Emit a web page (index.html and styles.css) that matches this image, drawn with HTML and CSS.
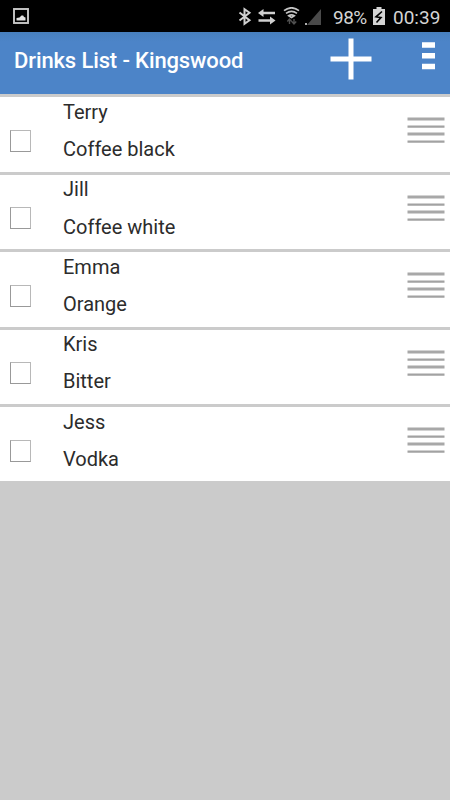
FILE: index.html
```
<!DOCTYPE html>
<html lang="en">

<head>
    <meta charset="UTF-8">
    <meta name="viewport" content="width=device-width, initial-scale=1.0">
    <title>Drinks List - Kingswood</title>
    <link rel="stylesheet" href="styles.css">
</head>

<body>
    <!-- Phone status bar -->
    <div class="status-bar">
        <svg class="picture-icon" width="16" height="16" viewBox="0 0 16 16">
            <rect x="1" y="1" width="14" height="14" fill="none" stroke="#c8c8c8" stroke-width="1.9" />
            <path d="M3.5 12.5V10l3-.5 2-2h1.7L11 9l1.5.5v3z" fill="#e0e0e0" />
        </svg>
        <svg class="status-icons" width="84" height="20" viewBox="0 0 84 20">
            <path d="M1.5 5.5l10 7.7-5 3.6V2.2l5 3.6-10 7.7" fill="none" stroke="#d0d0d0" stroke-width="2" />
            <path d="M20 6l5.5-4v2.7H37v2.6H25.5V10zM37.5 13.5l-5.5-4v2.7H20.5v2.6H32v2.7z" fill="#d0d0d0" />
            <path d="M46 3.6q7.5-5.6 15 0M48 6.4q5.5-4 11 0M50.7 8.8q2.8-2 5.6 0l-2.8 1.7z" fill="none" stroke="#c4c4c4" stroke-width="1.7" />
            <path d="M51.5 12v5M49.3 14.5l2.2-2.5 2.2 2.5M56 12v5M53.8 14.5l2.2 2.5 2.2-2.5" fill="none" stroke="#505050" stroke-width="1.4" />
            <path d="M83 2v16H69z" fill="#4a4a4a" />
            <rect x="67" y="16" width="2" height="2" fill="#b0b0b0" />
        </svg>
        <span class="battery-text">98%</span>
        <svg class="battery-icon" width="12" height="18" viewBox="0 0 12 18">
            <path d="M3.5 0h5v2H12v16H0V2h3.5z" fill="#d4d4d4" />
            <path d="M9 4.5L3 9.8l5 .8-4.5 4.9" fill="none" stroke="#000" stroke-width="1.6" />
        </svg>
        <span class="clock">00:39</span>
    </div>

    <div class="header">
        <h1>Drinks List - Kingswood</h1>
        <svg class="add-icon" width="42" height="42" viewBox="0 0 42 42">
            <path d="M21 .5v41M.5 21h41" stroke="#fff" stroke-width="5" />
        </svg>
        <svg class="menu-icon" width="13" height="28" viewBox="0 0 13 28">
            <path d="M0 3h13M0 13.8h13M0 24.5h13" stroke="#fff" stroke-width="5.6" />
        </svg>
    </div>

    <div class="list" id="list"></div>

    <script>
        const drinks = [
            { name: 'Terry', drink: 'Coffee black' },
            { name: 'Jill', drink: 'Coffee white' },
            { name: 'Emma', drink: 'Orange' },
            { name: 'Kris', drink: 'Bitter' },
            { name: 'Jess', drink: 'Vodka' }
        ];

        // Build one row for each person
        document.getElementById('list').innerHTML = drinks.map(d => `
            <div class="row">
                <input type="checkbox" class="check" aria-label="${d.name}">
                <div class="details">
                    <div class="name">${d.name}</div>
                    <div class="drink">${d.drink}</div>
                </div>
                <svg class="handle" width="38" height="27" viewBox="0 0 38 27">
                    <path d="M.5 2h37M.5 17h37" stroke="#a8a8a8" stroke-width="3" />
                    <path d="M.5 9.6h37M.5 24.6h37" stroke="#a2a2a2" stroke-width="2.2" />
                </svg>
            </div>`).join('');
    </script>
</body>

</html>
```
FILE: styles.css
```
body {
    margin: 0;
    min-height: 800px;
    font-family: Roboto, "Liberation Sans", sans-serif;
    background-color: #cbcbcb;
}

.status-bar {
    display: flex;
    align-items: flex-start;
    height: 32px;
    box-sizing: border-box;
    padding: 7px 9px 0 13px;
    background-color: #000;
    color: #d4d4d4;
    font-size: 19px;
    line-height: 21px;
}

.picture-icon {
    margin-top: 1px;
}

.status-icons {
    margin-left: auto;
}

.battery-text {
    width: 36px;
    margin-left: 11px;
    letter-spacing: -0.5px;
}

.battery-icon {
    margin-left: 4px;
}

.clock {
    width: 48px;
    margin-left: 8px;
    white-space: nowrap;
}

.header {
    display: flex;
    align-items: flex-start;
    height: 65.4px;
    box-sizing: border-box;
    padding-right: 15px;
    padding-left: 14px;
    background: linear-gradient(#477fbd, #4c84c8 10px);
    border-bottom: 3px solid #cbcbcb;
}

h1 {
    flex: 1;
    margin: 15px 0 0;
    color: #fff;
    font-size: 22px;
    font-weight: 500;
    letter-spacing: -0.12px;
    line-height: 27px;
}

.add-icon {
    margin-top: 6px;
}

.menu-icon {
    margin: 10px 0 0 50px;
}

.list {
    display: flex;
    flex-direction: column;
    gap: 3px;
}

.row {
    display: flex;
    align-items: flex-start;
    height: 74.4px;
    box-sizing: border-box;
    padding: 0 5px 0 10px;
    background-color: #fff;
}

.check {
    appearance: none;
    width: 21px;
    height: 22px;
    margin: 32.6px 0 0;
    background-color: #fff;
    border: 1px solid #b8b8b8;
    border-left-color: #999;
    border-bottom-color: #999;
}

.details {
    flex: 1;
    padding-top: 1.6px;
    margin-left: 32px;
    color: #2c2c2c;
    font-size: 20px;
    line-height: 26px;
}

.drink {
    margin-top: 11.2px;
}

.handle {
    margin-top: 20.1px;
}
```
